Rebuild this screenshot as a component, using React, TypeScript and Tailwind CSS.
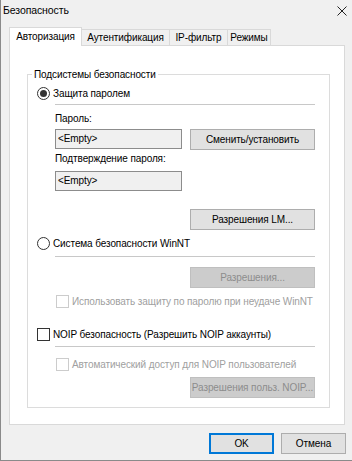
import { ReactNode } from "react";

function Radio({ checked, children }: { checked?: boolean; children: ReactNode }) {
  return (
    <div className="flex items-center h-[13px] pl-[9px]">
      <span className="w-[13px] h-[13px] rounded-full border border-[#333333] bg-white flex items-center justify-center">
        {checked && <span className="w-[7px] h-[7px] rounded-full bg-[#333333]" />}
      </span>
      <span className="ml-[3px] leading-[13px] whitespace-nowrap">{children}</span>
    </div>
  );
}

function Check({ disabled, children, indent }: { disabled?: boolean; children: ReactNode; indent?: boolean }) {
  return (
    <div className={indent ? "flex items-center h-[13px] pl-[28px]" : "flex items-center h-[13px] pl-[9px]"}>
      <span
        className={
          disabled
            ? "w-[13px] h-[13px] border border-[#cccccc] bg-white"
            : "w-[13px] h-[13px] border border-[#333333] bg-white"
        }
      />
      <span
        className={
          disabled
            ? "ml-[3px] leading-[13px] whitespace-nowrap text-[#a0a0a0]"
            : "ml-[3px] leading-[13px] whitespace-nowrap"
        }
      >
        {children}
      </span>
    </div>
  );
}

function Btn({ disabled, children }: { disabled?: boolean; children: ReactNode }) {
  return (
    <button
      type="button"
      className={
        disabled
          ? "w-[125px] h-[21px] border border-[#bfbfbf] bg-[#cccccc] text-[#8c8c8c] leading-[19px] whitespace-nowrap"
          : "w-[125px] h-[21px] border border-[#adadad] bg-[#e1e1e1] leading-[19px] whitespace-nowrap"
      }
    >
      {children}
    </button>
  );
}

function Separator() {
  return <div className="ml-[27px] mr-[14px] h-px bg-[#c8c8c8]" />;
}

function Field({ value }: { value: string }) {
  return (
    <div className="w-[127px] h-[20px] border border-[#8c8c8c] bg-[#f0f0f0] px-[2px] leading-[18px]">
      {value}
    </div>
  );
}

const tabs = [
  { label: "Аутентификация", width: "w-[88px]" },
  { label: "IP-фильтр", width: "w-[58px]" },
  { label: "Режимы", width: "w-[43px]" },
];

export default function App() {
  return (
    <div className="w-[352px] h-[461px] bg-[#f0f0f0] border-l border-b border-[#8a8a8a] text-[10px] tracking-[-0.1px] text-black font-['Liberation_Sans',Arial,sans-serif] flex flex-col">
      <div className="h-[27px] flex items-start pl-[2px] pt-[4px] pr-[5px]">
        <span className="leading-[13px] text-[10.5px]">Безопасность</span>
        <svg className="ml-auto mt-[2px]" width="10" height="10" viewBox="0 0 10 10">
          <path d="M0.5 0.5L9.5 9.5M9.5 0.5L0.5 9.5" stroke="#222" strokeWidth="1" />
        </svg>
      </div>

      <div className="flex items-end pl-[8px] h-[19px] relative z-10">
        <div className="w-[73px] h-[19px] text-center bg-white border border-b-0 border-[#d9d9d9] leading-[17px]">
          Авторизация
        </div>
        {tabs.map((t) => (
          <div
            key={t.label}
            className={`${t.width} h-[16px] mb-px text-center whitespace-nowrap bg-[#f0f0f0] border border-b-0 border-l-0 border-[#d9d9d9] leading-[16px]`}
          >
            {t.label}
          </div>
        ))}
      </div>

      <div className="ml-[8px] w-[336px] -mt-px bg-white border border-[#d9d9d9] pt-[22px] pl-[17px] pr-[14px] pb-[16px]">
        <fieldset className="border border-[#dcdcdc] p-0 m-0 pb-[9px]">
          <legend className="ml-[4px] px-[2px] leading-[13px]">Подсистемы безопасности</legend>

          <div className="mt-[6px]">
            <Radio checked>Защита паролем</Radio>
          </div>
          <div className="mt-[4px]">
            <Separator />
          </div>

          <div className="ml-[27px] mr-[14px]">
            <div className="mt-[7px] leading-[13px]">Пароль:</div>
            <div className="mt-[4px] flex justify-between">
              <Field value="<Empty>" />
              <Btn>Сменить/установить</Btn>
            </div>
            <div className="mt-[2px] leading-[13px]">Подтверждение пароля:</div>
            <div className="mt-[6px]">
              <Field value="<Empty>" />
            </div>
            <div className="mt-[18px] flex justify-end">
              <Btn>Разрешения LM...</Btn>
            </div>
          </div>

          <div className="mt-[7px]">
            <Radio>Система безопасности WinNT</Radio>
          </div>
          <div className="mt-[6px]">
            <Separator />
          </div>
          <div className="mt-[10px] mr-[14px] flex justify-end">
            <Btn disabled>Разрешения...</Btn>
          </div>
          <div className="mt-[7px]">
            <Check disabled indent>
              Использовать защиту по паролю при неудаче WinNT
            </Check>
          </div>

          <div className="mt-[20px]">
            <Check>NOIP безопасность (Разрешить NOIP аккаунты)</Check>
          </div>
          <div className="mt-[5px]">
            <Separator />
          </div>
          <div className="mt-[11px]">
            <Check disabled indent>
              Автоматический доступ для NOIP пользователей
            </Check>
          </div>
          <div className="mt-[6px] mr-[14px] flex justify-end">
            <Btn disabled>Разрешения польз. NOIP...</Btn>
          </div>
        </fieldset>
      </div>

      <div className="mt-[8px] flex justify-end gap-[7px] pr-[6px]">
        <button
          type="button"
          className="w-[65px] h-[21px] border-2 border-[#0078d7] bg-[#e1e1e1] leading-[17px]"
        >
          OK
        </button>
        <button
          type="button"
          className="w-[65px] h-[21px] border border-[#adadad] bg-[#e1e1e1] leading-[19px]"
        >
          Отмена
        </button>
      </div>
    </div>
  );
}
